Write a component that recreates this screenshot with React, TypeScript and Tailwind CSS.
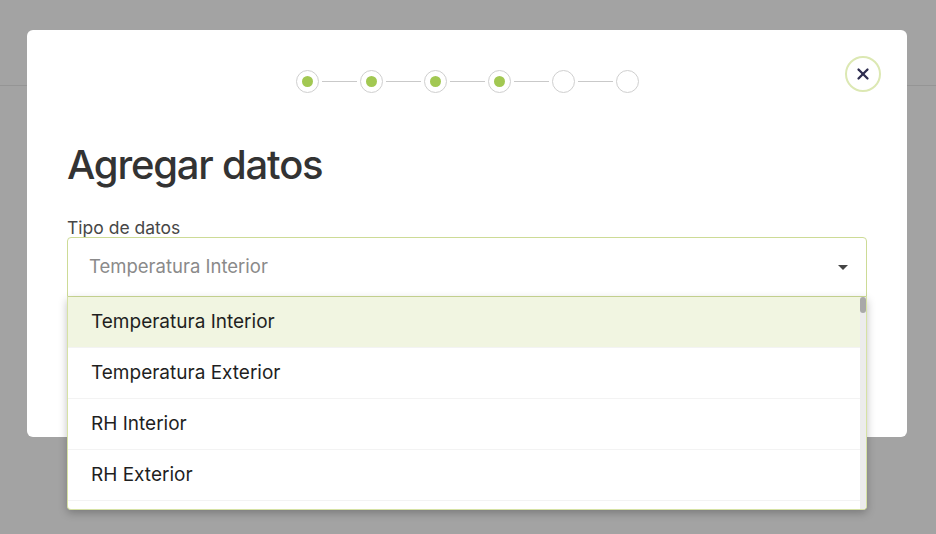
import { X } from "lucide-react";

const steps = [true, true, true, true, false, false];

const options = ["Temperatura Interior", "Temperatura Exterior", "RH Interior", "RH Exterior"];

function Stepper() {
	return (
		<div className="flex items-center justify-center">
			{steps.map((done, i) => (
				<div key={i} className="flex items-center">
					{i > 0 && <div className="mx-[3px] h-px w-[35px] bg-[#c9c9c9]" />}
					<div className="flex h-[23px] w-[23px] items-center justify-center rounded-full border-[1.5px] border-[#cfcfcf]">
						{done && <div className="h-[11px] w-[11px] rounded-full bg-[#a2c852]" />}
					</div>
				</div>
			))}
		</div>
	);
}

export default function App() {
	return (
		<div className="relative h-[534px] w-[936px] overflow-hidden bg-[#a3a3a3] font-['Inter',sans-serif]">
			<div className="mt-[85px] h-px w-full bg-[#959595]" />

			<div className="absolute left-[27px] top-[30px] h-[407px] w-[880px] rounded-md bg-white px-10 pt-10">
				<Stepper />
				<button className="absolute right-[26px] top-[26px] flex h-9 w-9 items-center justify-center rounded-full border-2 border-[#dce8b3] text-[#2e2d4f]">
					<X size={18} strokeWidth={3} />
				</button>

				<h1 className="mt-[52px] text-[40px] leading-none font-medium tracking-[-1.2px] text-[#333333]">
					Agregar datos
				</h1>

				<div className="mt-[34px] text-[17.5px] leading-none text-[#474747]">Tipo de datos</div>
				<div className="relative flex h-[60px] items-center justify-between rounded-t border border-[#cddb96] pl-[21px] pr-[18px]">
					<span className="text-[18.5px] text-[#8a8a8a]">Temperatura Interior</span>
					<span className="mt-[2px] h-0 w-0 border-x-[5px] border-t-[5px] border-x-transparent border-t-[#444444]" />
				</div>
			</div>

			<div className="absolute left-[67px] top-[297px] h-[213px] w-[800px] overflow-hidden rounded-b border-x border-b border-[#d6e2a4] bg-white shadow-[0_3px_8px_rgba(0,0,0,0.25)]">
				<ul className="mr-[6px]">
					{options.map((o, i) => (
						<li
							key={o}
							className={`flex h-[51px] items-center border-b border-[#f3f3f3] px-[23px] text-[19px] text-[#1f1f1f] ${
								i === 0 ? "bg-[#f1f5e1]" : "bg-white"
							}`}
						>
							{o}
						</li>
					))}
				</ul>
				<div className="absolute right-0 top-0 h-full w-[6px] bg-[#ececec]">
					<div className="h-[16px] w-full rounded-sm bg-[#a9a9a9]" />
				</div>
			</div>
		</div>
	);
}
